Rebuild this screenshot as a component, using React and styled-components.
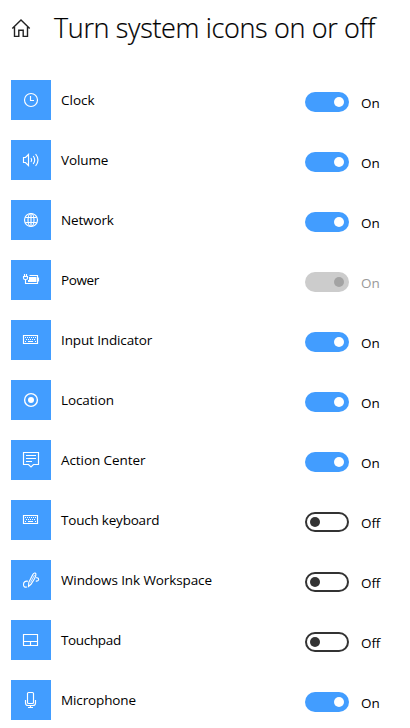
import React from "react";
import styled, { createGlobalStyle } from "styled-components";

const GlobalStyle = createGlobalStyle`
  * { box-sizing: border-box; }
  body {
    margin: 0;
    background: #fff;
    color: #000;
    font-family: "Open Sans", "Noto Sans", sans-serif;
    overflow: hidden;
  }
`;

const Page = styled.main`
  width: 410px;
  height: 728px;
  overflow: hidden;
  background: #fff;
`;

const Header = styled.header`
  display: flex;
  align-items: center;
  height: 80px;
  padding: 0 0 24px 11px;
`;

const HomeIcon = styled.svg`
  width: 20px;
  height: 20px;
  flex: none;
`;

const Title = styled.h1`
  margin: 0 0 0 23px;
  font-size: 27px;
  line-height: 40px;
  font-weight: 300;
  letter-spacing: -0.34px;
  -webkit-text-stroke: 0.2px #000;
  white-space: nowrap;
`;

const List = styled.ul`
  display: flex;
  flex-direction: column;
  gap: 20px;
  margin: 0;
  padding: 0 0 0 11px;
  list-style: none;
`;

const Row = styled.li`
  display: flex;
  height: 40px;
`;

const Tile = styled.span`
  width: 40px;
  height: 40px;
  flex: none;
  background: #429dff;
`;

const Glyph = styled.svg`
  display: block;
  width: 40px;
  height: 40px;
  fill: none;
  stroke: #fff;
  stroke-width: 1.15;
`;

const Label = styled.span`
  width: 244px;
  margin-left: 10px;
  font-size: 13.5px;
  line-height: 40px;
  letter-spacing: ${(p) => p.$tracking}px;
  white-space: nowrap;
`;

const Switch = styled.button`
  display: flex;
  align-items: center;
  justify-content: ${(p) => (p.$on ? "flex-end" : "flex-start")};
  width: 44px;
  height: 20px;
  flex: none;
  margin: 12px 12px 0 0;
  padding: 0 ${(p) => (p.$on ? 5 : 3)}px;
  border: ${(p) => (p.$on ? "0" : "2px solid #333")};
  border-radius: 10px;
  background: ${(p) => (!p.$on ? "#fff" : p.disabled ? "#ccc" : "#429dff")};
`;

const Thumb = styled.span`
  width: 10px;
  height: 10px;
  border-radius: 50%;
  background: ${(p) => (p.$disabled ? "#a3a3a3" : p.$on ? "#fff" : "#333")};
`;

const State = styled.span`
  padding-top: 3px;
  font-size: 13.5px;
  line-height: 40px;
  letter-spacing: -0.1px;
  color: ${(p) => (p.$disabled ? "#999" : "#000")};
`;

const keyboard = (
  <>
    <path d="M12.5 15.5h14v8h-14z" />
    <path d="M14 17.5h11.5" strokeDasharray="1 1" />
    <path d="M15 19.5h10" strokeDasharray="1 1" />
    <path d="M14 21.5h1M17 21.5h5M24 21.5h1" />
  </>
);

const icons = {
  clock: (
    <>
      <circle cx="20" cy="20" r="6.5" />
      <path d="M19.5 16v4.5H23" />
    </>
  ),
  volume: (
    <>
      <path d="M12.5 17.5h2l3-3v11l-3-3h-2z" />
      <path d="M20 18q1.4 2 0 4M22.2 16q3 4 0 8M24.6 14q4.8 6 0 12" />
    </>
  ),
  network: (
    <>
      <circle cx="20" cy="20" r="6.5" />
      <ellipse cx="20" cy="20" rx="3" ry="6.5" />
      <path d="M14.3 17.5h11.4M14.3 22.5h11.4M20 13.5v13" />
    </>
  ),
  power: (
    <>
      <path d="M13.5 14v2M15.5 14v2M12 16.5h5M12.5 16.5v1.5q0 1.500 1.500 1.500h1q1.500 0 1.500-1.500v-1.500M14.500 19.500v4h2.500" />
      <path d="M18.500 15.500h8v8H17M27.500 17.500v4" />
      <path d="M18 17h7.500v5H17v-2h1z" fill="#fff" stroke="none" />
    </>
  ),
  keyboard,
  location: (
    <>
      <circle cx="20" cy="20" r="6.4" strokeWidth="1.4" />
      <circle cx="20" cy="20" r="3" fill="#fff" stroke="none" />
    </>
  ),
  action: (
    <>
      <path d="M12.5 12.5h15v12h-5l-2.5 2.5-2.5-2.5h-5z" />
      <path d="M15 15.5h10M15 18.5h10M15 21.5h6" />
    </>
  ),
  ink: (
    <>
      <path d="M17 21.200c-2.800-.6-4.500 1-4.500 3.200 0 2.200 1.300 3.200 3.300 2.500" />
      <path d="M17.500 26.500l.3-4.200 3.900-7.600c1-2 2.900-2.200 3.200-.8.200 1.200-.4 3-1.400 4.800l-3.500 5.600z" />
      <path d="M19.500 22.500l4-7.500" strokeWidth="0.8" />
      <path d="M25 17.800c1.500-.3 2.600.4 2.600 1.700 0 1.200-1.300 1.900-2.800 1.400" />
    </>
  ),
  touchpad: <path d="M12.5 14.5h14v11h-14zM12.5 21.5h14M19.5 21.5v4" />,
  microphone: (
    <>
      <rect x="16.5" y="12.5" width="6" height="11" rx="1" />
      <path d="M14.5 20v3q0 2.500 2.500 2.500h5q2.500 0 2.500-2.500v-3M19.500 25.500v2M17 27.500h5" />
    </>
  ),
};

const items = [
  { name: "Clock", icon: "clock", on: true, tracking: 0 },
  { name: "Volume", icon: "volume", on: true, tracking: -0.1 },
  { name: "Network", icon: "network", on: true, tracking: -0.15 },
  { name: "Power", icon: "power", on: true, disabled: true, tracking: -0.4 },
  { name: "Input Indicator", icon: "keyboard", on: true, tracking: -0.13 },
  { name: "Location", icon: "location", on: true, tracking: -0.12 },
  { name: "Action Center", icon: "action", on: true, tracking: -0.08 },
  { name: "Touch keyboard", icon: "keyboard", on: false, tracking: -0.21 },
  { name: "Windows Ink Workspace", icon: "ink", on: false, tracking: -0.1 },
  { name: "Touchpad", icon: "touchpad", on: false, tracking: -0.35 },
  { name: "Microphone", icon: "microphone", on: true, tracking: -0.12 },
];

export default function App() {
  return (
    <Page>
      <GlobalStyle />
      <Header>
        <HomeIcon viewBox="0 0 20 20" fill="none" stroke="#222" strokeWidth="1.4">
          <path d="M1.3 10.500L10 2l8.700 8.500M3.500 9v9.400h4.300v-6.200h4.400v6.200h4.300V9" />
        </HomeIcon>
        <Title>Turn system icons on or off</Title>
      </Header>
      <List>
        {items.map(({ name, icon, on, disabled, tracking }) => (
          <Row key={name}>
            <Tile>
              <Glyph viewBox="0 0 40 40">{icons[icon]}</Glyph>
            </Tile>
            <Label $tracking={tracking}>{name}</Label>
            <Switch $on={on} disabled={disabled} role="switch" aria-checked={on} aria-label={name}>
              <Thumb $on={on} $disabled={disabled} />
            </Switch>
            <State $disabled={disabled}>{on ? "On" : "Off"}</State>
          </Row>
        ))}
      </List>
    </Page>
  );
}
